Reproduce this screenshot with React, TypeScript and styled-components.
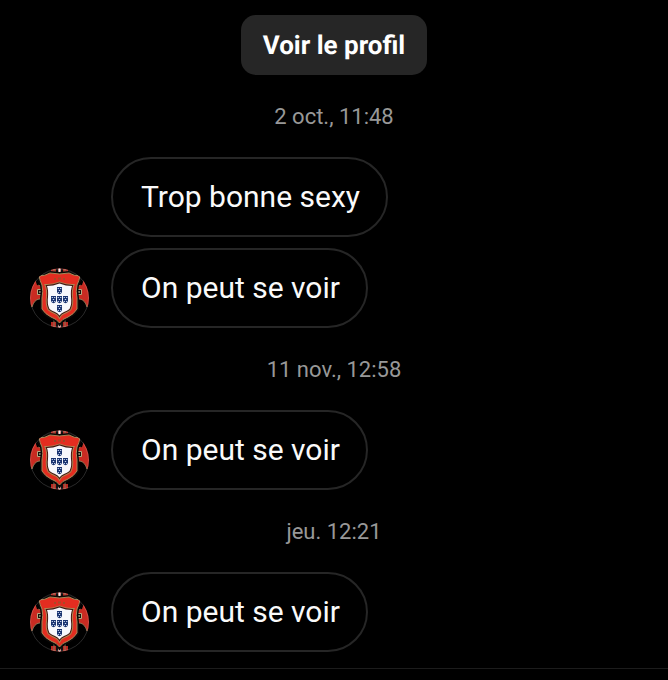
import React, { useId } from "react";
import styled, { createGlobalStyle } from "styled-components";

const GlobalStyle = createGlobalStyle`
  * { box-sizing: border-box; }
  body {
    margin: 0;
    background: #000;
    color: #fafafa;
    font-family: Roboto, "Liberation Sans", sans-serif;
  }
`;

const Page = styled.div`
  min-height: 100vh;
  display: flex;
  flex-direction: column;
`;

const Thread = styled.main`
  display: flex;
  flex-direction: column;
  padding: 15px 30px 16px;
`;

const ProfileButton = styled.button`
  align-self: center;
  padding: 15px 22px 13px;
  border: 0;
  border-radius: 15px;
  background: #262626;
  color: #fff;
  font: 700 26px/32px Roboto, "Liberation Sans", sans-serif;
  text-rendering: geometricPrecision;
  cursor: pointer;
`;

const DateLine = styled.time`
  display: block;
  padding: 2px 0 0;
  color: #989898;
  font-size: 22px;
  line-height: 80px;
  text-align: center;
`;

const Group = styled.div`
  display: flex;
  flex-direction: column;
  gap: 11px;
`;

const Row = styled.div`
  display: grid;
  grid-template-columns: 59px auto;
  justify-content: start;
  align-items: end;
  column-gap: 22px;
`;

const Bubble = styled.p`
  grid-column: 2;
  margin: 0;
  padding: 0 26px 0 28px;
  border: 2px solid #262626;
  border-radius: 40px;
  font-size: 30px;
  line-height: 76px;
`;

const AvatarFrame = styled.svg`
  display: block;
  width: 59px;
  height: 60px;
`;

const Composer = styled.footer`
  flex: 1;
  border-top: 1px solid #1c1c1c;
`;

const escutcheons = [
  [29.5, 22.5],
  [23.5, 31.5],
  [29.5, 31.5],
  [35.5, 31.5],
  [29.5, 40.5],
];

const outerShield =
  "M9 8Q15 8 20 5L29.5 6L39 5Q44 8 50 8Q49 13 47 17Q45.500 23 47 30V41Q44 46 38 49Q32 51 29.500 55Q27 51 21 49Q15 46 12 41V30Q13.500 23 12 17Q10 13 9 8Z";
const innerShield =
  "M17 18Q23 18 29.500 15.500Q36 18 42 18Q40.500 22 41 29Q42 36 39.500 41Q37 43 34 44Q31 45 29.500 47.500Q28 45 25 44Q22 43 19.500 41Q17 36 18 29Q18.500 22 17 18Z";

function Avatar() {
  const clip = useId();
  return (
    <AvatarFrame viewBox="0 0 59 60" role="img" aria-label="Photo de profil">
      <defs>
        <clipPath id={clip}>
          <circle cx="29.5" cy="30" r="29.5" />
        </clipPath>
      </defs>
      <g clipPath={`url(#${clip})`}>
        <rect width="59" height="60" fill="#000" />
        <path d="M21 0h17v4H21zM21 54h17v6H21z" fill="#b92821" />
        <path d="M24 0v60M35 0v60" stroke="#89765a" />
        <path d="M27 0v60M32 0v60" stroke="#111" strokeWidth="2" />
        <path d="M29.500 0v60" stroke="#eee" strokeWidth="2" />
        <path
          d="M-1 12H6Q7 17 10 18H14V31H9Q4 32 2 39L-1 38ZM60 12H53Q52 17 49 18H45V31H50Q55 32 57 39L60 38Z"
          fill="#c92b22"
          stroke="#8f7654"
        />
        <path d="M-1 11H6L8 17M60 11H53L51 17" fill="none" stroke="#000" strokeWidth="2" />
        <path d="M13 21.500H7.500V26.500H13M46 21.500H51.500V26.500H46" fill="#14120c" stroke="#b9aa82" />
        <path d="M9 24h2M48 24h2" stroke="#eee6bb" />
        <path d={outerShield} fill="#e32d20" stroke="#0b0908" strokeWidth="4" />
        <path d={outerShield} fill="#e32d20" stroke="#a58858" />
        <path d={innerShield} fill="#f7f8fc" stroke="#ad8352" strokeWidth="4" />
        <path d={innerShield} fill="#f7f8fc" stroke="#411511" strokeWidth="2" />
        <path d={innerShield} fill="#f7f8fc" />
        <path d="M24 11h2M28 10.500h3M33 11h2" stroke="#a64b28" strokeWidth="2" />
        {escutcheons.map(([x, y]) => (
          <g key={`${x}-${y}`} transform={`translate(${x} ${y})`}>
            <path d="M-2.500-3.500h5V1.500Q2 3.500 0 3.800Q-2 3.500-2.500 1.500Z" fill="#19336f" />
            <path d="M-1.800-2h1.200M.6-2h1.200M-.7 0H.7M-1.600 2h1M.6 2h1" stroke="#c9d9f4" />
          </g>
        ))}
      </g>
      <circle cx="29.5" cy="30" r="29" fill="none" stroke="#fff" strokeOpacity=".16" />
    </AvatarFrame>
  );
}

const conversation = [
  { date: "2 oct., 11:48", messages: ["Trop bonne sexy", "On peut se voir"] },
  { date: "11 nov., 12:58", messages: ["On peut se voir"] },
  { date: "jeu. 12:21", messages: ["On peut se voir"] },
];

export default function App() {
  return (
    <Page>
      <GlobalStyle />
      <Thread>
        <ProfileButton type="button">Voir le profil</ProfileButton>
        {conversation.map(({ date, messages }) => (
          <section key={date}>
            <DateLine>{date}</DateLine>
            <Group>
              {messages.map((message, index) => (
                <Row key={message}>
                  {index === messages.length - 1 && <Avatar />}
                  <Bubble>{message}</Bubble>
                </Row>
              ))}
            </Group>
          </section>
        ))}
      </Thread>
      <Composer />
    </Page>
  );
}
